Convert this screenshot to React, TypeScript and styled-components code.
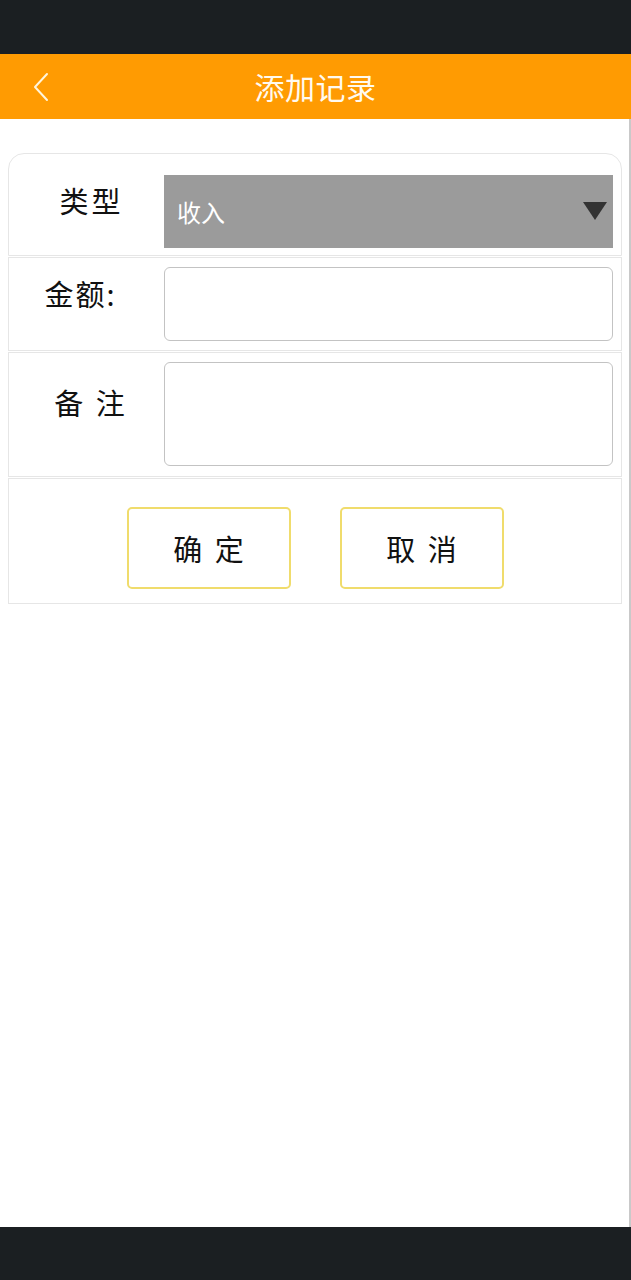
import styled, { createGlobalStyle } from "styled-components";

const GlobalStyle = createGlobalStyle`
  html, body {
    margin: 0;
    padding: 0;
    background: #ffffff;
  }
  body {
    font-family: "Noto Sans CJK SC", "Noto Sans", sans-serif;
  }
  * {
    box-sizing: border-box;
  }
`;

const App = () => {
  return (
    <Page>
      <GlobalStyle />
      <StatusBar />
      <Header>
        <BackButton aria-label="返回">
          <svg width="18" height="30" viewBox="0 0 18 30" fill="none">
            <path
              d="M15 2 L3 15 L15 28"
              stroke="#fff5dc"
              strokeWidth="2"
              strokeLinecap="round"
              strokeLinejoin="round"
            />
          </svg>
        </BackButton>
        <Title>添加记录</Title>
      </Header>

      <Main>
        <Card>
          <Row $first $top={21} $bottom={7}>
            <Label $lift={22} $tracking={3} $shift={5}>
              类型
            </Label>
            <Select>
              <span>收入</span>
              <svg width="24" height="18" viewBox="0 0 24 18">
                <path d="M0 0 H24 L12 18 Z" fill="#333333" />
              </svg>
            </Select>
          </Row>

          <Row $top={9} $bottom={9}>
            <Label $lift={22} $tracking={2} $shift={-6}>
              金额:
            </Label>
            <TextInput type="text" />
          </Row>

          <Row $top={9} $bottom={10}>
            <Label $lift={24} $shift={3}>
              备 注
            </Label>
            <TextArea />
          </Row>

          <ButtonRow>
            <ActionButton type="button">确 定</ActionButton>
            <ActionButton type="button">取 消</ActionButton>
          </ButtonRow>
        </Card>
      </Main>

      <NavBar />
    </Page>
  );
};

export default App;

const Page = styled.div`
  width: 631px;
  height: 1280px;
  display: flex;
  flex-direction: column;
  background: #ffffff;
  overflow: hidden;
`;

const StatusBar = styled.div`
  height: 54px;
  flex-shrink: 0;
  background: #1b1f22;
`;

const Header = styled.header`
  height: 65px;
  flex-shrink: 0;
  background: #ff9b02;
  display: flex;
  align-items: center;
  justify-content: center;
  position: relative;
`;

const BackButton = styled.button`
  position: absolute;
  left: 31px;
  top: 17px;
  width: 20px;
  height: 32px;
  padding: 0;
  border: none;
  background: transparent;
  display: flex;
  align-items: center;
  justify-content: center;
`;

const Title = styled.h1`
  margin: 0 0 2px 0;
  color: #fffaf0;
  font-size: 30px;
  font-weight: 400;
  line-height: 1;
  letter-spacing: 0.5px;
`;

const Main = styled.main`
  flex: 1;
  padding: 34px 8px 0 8px;
  border-right: 2px solid #c9c9c9;
`;

const Card = styled.section`
  width: 614px;
  display: flex;
  flex-direction: column;
  gap: 1px;
`;

const Row = styled.div<{ $first?: boolean; $top: number; $bottom: number }>`
  display: grid;
  grid-template-columns: 155px 1fr;
  border: 1px solid #e6e6e6;
  border-radius: ${(p) => (p.$first ? "16px 16px 0 0" : "0")};
  padding: ${(p) => `${p.$top}px 8px ${p.$bottom}px 0`};
`;

/* $lift raises the text, $shift nudges it sideways (px of centre offset) */
const Label = styled.div<{ $lift: number; $tracking?: number; $shift?: number }>`
  display: flex;
  align-items: center;
  justify-content: center;
  padding-bottom: ${(p) => p.$lift}px;
  padding-left: ${(p) => Math.max(0, (p.$shift ?? 0) * 2)}px;
  padding-right: ${(p) => Math.max(0, -(p.$shift ?? 0) * 2)}px;
  font-size: 29px;
  line-height: 1;
  color: #111111;
  letter-spacing: ${(p) => p.$tracking ?? 0}px;
  word-spacing: 6px;
  white-space: pre;
`;

const Select = styled.div`
  height: 73px;
  background: #9b9b9b;
  display: flex;
  align-items: center;
  justify-content: space-between;
  padding: 0 6px 0 13px;
  color: #ffffff;
  font-size: 24px;
  line-height: 1;

  svg {
    margin-top: -1px;
  }
`;

const TextInput = styled.input`
  height: 74px;
  width: 100%;
  border: 1.5px solid #c3c3c3;
  border-radius: 6px;
  background: #ffffff;
  font-size: 24px;
  font-family: inherit;
  padding: 0 10px;
  outline: none;
`;

const TextArea = styled.textarea`
  height: 104px;
  width: 100%;
  border: 1.5px solid #c3c3c3;
  border-radius: 6px;
  background: #ffffff;
  font-size: 24px;
  font-family: inherit;
  padding: 8px 10px;
  resize: none;
  outline: none;
  display: block;
`;

const ButtonRow = styled.div`
  border: 1px solid #e6e6e6;
  padding: 28px 0 14px 0;
  display: flex;
  justify-content: center;
  gap: 49px;
`;

const ActionButton = styled.button`
  width: 164px;
  height: 82px;
  background: #ffffff;
  border: 2px solid #f0dc6c;
  border-radius: 5px;
  font-family: "Noto Sans CJK SC", "Noto Sans", sans-serif;
  font-size: 29px;
  line-height: 1;
  color: #111111;
  word-spacing: 6px;
  white-space: pre;
  padding: 0;
`;

const NavBar = styled.div`
  height: 53px;
  flex-shrink: 0;
  background: #1b1f22;
`;
